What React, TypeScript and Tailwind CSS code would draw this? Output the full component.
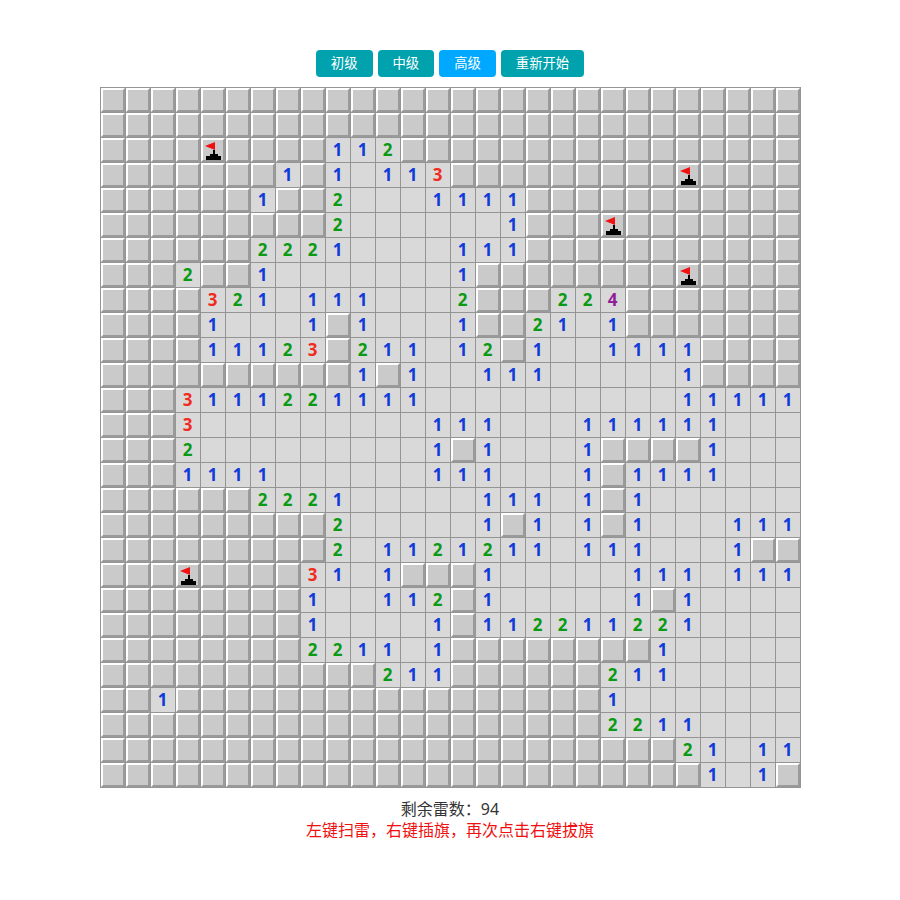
const BOARD = [
  "############################",
  "############################",
  "####F####112################",
  "#######1#1.113#########F####",
  "######1##2...1111###########",
  "#########2......1###F#######",
  "######2221....111###########",
  "###2##1.......1########F####",
  "####321.111...2###224#######",
  "####1...1#1...1##21.1#######",
  "####11123#211.12#1..1111####",
  "##########1#1..111.....1####",
  "###3111221111..........11111",
  "###3.........111...111111...",
  "###2.........1#1...1####1...",
  "###1111......111...1#1111...",
  "######2221.....111.1#1......",
  "#########2.....1#1.1#1...111",
  "#########2.1121211.111...1##",
  "###F####31.1###1.....111.111",
  "########1..112#1.....1#1....",
  "########1....1#112211221....",
  "########2211.1########1.....",
  "###########211######211.....",
  "##1#################1.......",
  "####################2211....",
  "#######################21.11",
  "########################1.1#",
];

const NUM_COLORS: Record<string, string> = {
  "1": "text-[#0f3bd9]",
  "2": "text-[#0a9a14]",
  "3": "text-[#f02b1d]",
  "4": "text-[#8f1f96]",
};

function Flag() {
  return (
    <svg width="16" height="20" viewBox="0 0 16 20">
      <path d="M0 6 L10 2 L10 10 Z" fill="#f01010" />
      <rect x="8" y="10" width="2" height="6" fill="#000" />
      <rect x="5" y="14" width="8" height="2" fill="#000" />
      <rect x="1" y="16" width="15" height="4" fill="#000" />
    </svg>
  );
}

function Cell({ value }: { value: string }) {
  if (value === "#" || value === "F") {
    return (
      <div className="h-[25px] w-[25px] border-t border-l border-[#959595]">
        <div className="flex h-[24px] w-[24px] items-center justify-center border-2 border-t-white border-l-white border-r-[#9a9a9a] border-b-[#9a9a9a] bg-[#cacaca]">
          {value === "F" && <Flag />}
        </div>
      </div>
    );
  }
  return (
    <div
      className={`flex h-[25px] w-[25px] items-center justify-center border-t border-l border-[#959595] bg-[#d9d9d9] text-[17px] font-bold ${NUM_COLORS[value] ?? ""}`}
    >
      {value === "." ? "" : value}
    </div>
  );
}

export default function App() {
  const buttons = [
    { label: "初级", bg: "bg-[#00a2ae]" },
    { label: "中级", bg: "bg-[#00a2ae]" },
    { label: "高级", bg: "bg-[#00a9ff]" },
    { label: "重新开始", bg: "bg-[#00a2ae]" },
  ];

  return (
    <div className="flex min-h-[900px] flex-col items-center bg-white pt-[50px] font-['Noto_Sans','Noto_Sans_CJK_SC',sans-serif]">
      <div className="flex gap-[5px]">
        {buttons.map((b) => (
          <button
            key={b.label}
            className={`h-[27px] rounded px-[15px] text-[13.33px] text-white ${b.bg}`}
          >
            {b.label}
          </button>
        ))}
      </div>

      <div className="mt-[10px] grid w-[701px] grid-cols-[repeat(28,25px)] border-r border-b border-[#959595]">
        {BOARD.flatMap((row, r) =>
          row.split("").map((v, c) => <Cell key={`${r}-${c}`} value={v} />),
        )}
      </div>

      <div className="mt-[11px] text-[16px] leading-[21px] text-[#333]">剩余雷数：94</div>
      <div className="text-[16px] leading-[21px] text-[#f01010]">左键扫雷，右键插旗，再次点击右键拔旗</div>
    </div>
  );
}
